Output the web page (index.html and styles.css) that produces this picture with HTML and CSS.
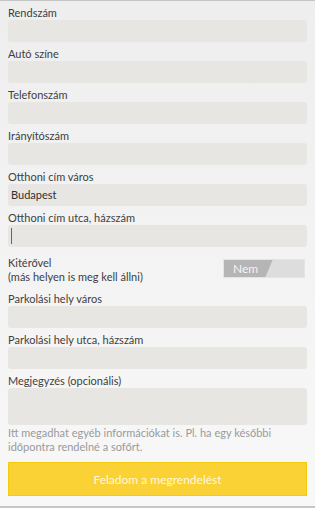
FILE: index.html
```html
<!DOCTYPE html>
<html lang="hu">
<head>
<meta charset="utf-8">
<title>Megrendelés</title>
<link rel="stylesheet" href="styles.css">
</head>
<body>
<div class="screen">
  <form class="form">
    <div class="field"><label class="label">Rendszám</label><div class="input"></div></div>
    <div class="field"><label class="label">Autó színe</label><div class="input"></div></div>
    <div class="field"><label class="label">Telefonszám</label><div class="input"></div></div>
    <div class="field"><label class="label">Irányítószám</label><div class="input"></div></div>
    <div class="field"><label class="label">Otthoni cím város</label><div class="input">Budapest</div></div>
    <div class="field"><label class="label">Otthoni cím utca, házszám</label><div class="input"><span class="cursor"></span></div></div>
    <div class="switch-row">
      <div class="switch-text">Kitérővel<br>(más helyen is meg kell állni)</div>
      <div class="toggle">
        <svg class="toggle-bg" width="82" height="19" viewBox="0 0 82 19">
          <rect x="0" y="0" width="82" height="19" fill="#dddddd"/>
          <polygon points="0,0 50,0 42,19 0,19" fill="#b5b5b5"/>
          <rect x="0.5" y="0.5" width="81" height="18" fill="none" stroke="#e4e4e4"/>
        </svg>
        <span class="toggle-label">Nem</span>
      </div>
    </div>
    <div class="field"><label class="label">Parkolási hely város</label><div class="input"></div></div>
    <div class="field"><label class="label">Parkolási hely utca, házszám</label><div class="input"></div></div>
    <div class="field"><label class="label">Megjegyzés (opcionális)</label><div class="input textarea"></div></div>
    <p class="help">Itt megadhat egyéb információkat is. Pl. ha egy későbbi időpontra rendelné a sofőrt.</p>
    <div class="button">Feladom a megrendelést</div>
  </form>
</div>
</body>
</html>
```
FILE: styles.css
```css
html, body {
  margin: 0;
  padding: 0;
  background: #ffffff;
}
body {
  font-family: Lato, "Open Sans", sans-serif;
  font-size: 11px;
  color: #404040;
}
.screen {
  width: 315px;
  height: 508px;
  box-sizing: border-box;
  border-top: 1px solid #c4c4c4;
  border-bottom: 2px solid #c6c6c6;
  background: linear-gradient(#eeeeee, #f8f8f8);
  padding: 1px 8px 0 8px;
}
.form {
  display: flex;
  flex-direction: column;
  width: 299px;
}
.field {
  display: flex;
  flex-direction: column;
  margin-bottom: 1px;
}
.label {
  display: block;
  height: 18px;
  box-sizing: border-box;
  padding-top: 3px;
  line-height: 15px;
  color: #404040;
}
.input {
  height: 22px;
  background: #e7e6e2;
  border-radius: 3px;
  padding: 0 3px;
  line-height: 22px;
  font-size: 11px;
  color: #303030;
  display: flex;
  align-items: center;
}
.textarea {
  height: 37px;
}
.cursor {
  display: block;
  width: 1px;
  height: 16px;
  background: #666;
}
.switch-row {
  display: flex;
  justify-content: space-between;
  align-items: flex-start;
  height: 40px;
  box-sizing: border-box;
  padding-top: 8px;
}
.switch-text {
  line-height: 14px;
  color: #404040;
}
.toggle {
  display: grid;
  width: 82px;
  height: 19px;
  margin-top: 3px;
  margin-right: 2px;
}
.toggle-bg, .toggle-label {
  grid-area: 1 / 1;
}
.toggle-bg {
  display: block;
}
.toggle-label {
  color: #f4f4f4;
  font-size: 12px;
  line-height: 19px;
  padding-left: 10px;
}
.help {
  margin: 0;
  line-height: 14px;
  color: #9a9a9a;
}
.button {
  margin-top: 8px;
  height: 34px;
  box-sizing: border-box;
  background: #fbd235;
  border: 1px solid #f5cb10;
  color: #fff8dc;
  font-size: 12px;
  display: flex;
  align-items: center;
  justify-content: center;
}
```
